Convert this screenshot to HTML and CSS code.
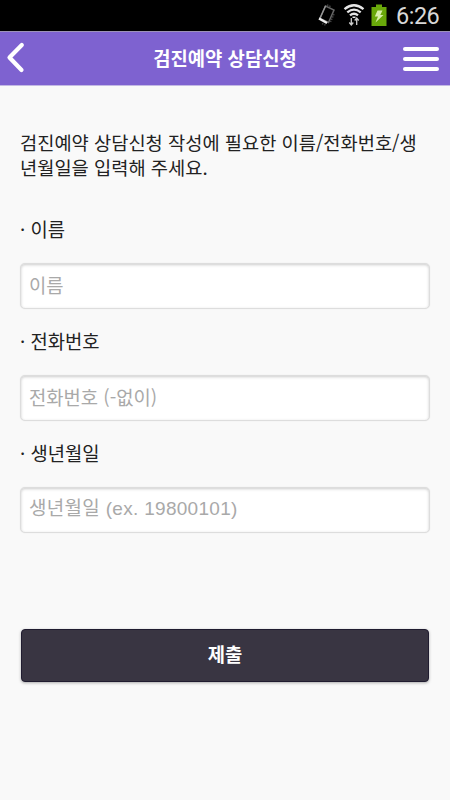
FILE: index.html
```html
<!DOCTYPE html>
<html lang="ko">
<head>
<meta charset="utf-8">
<title>검진예약 상담신청</title>
<link rel="stylesheet" href="styles.css">
</head>
<body>
<div class="status">
  <svg class="rotate" width="18" height="22" viewBox="0 0 18 22" fill="none">
    <path d="M7.500 2L16 6L10.500 18.500L2 14.500Z" stroke="#666" stroke-width="1.500"/>
    <path d="M7.500 2L1.800 14.500" stroke="#999" stroke-width="1.300"/>
    <path d="M1 14.500L9 19" stroke="#eee" stroke-width="2.400"/>
    <path d="M9 .8L13 2.800M16 10L12.500 18M4 19.500L7.500 21" stroke="#444" stroke-width="1.500" stroke-dasharray="1.500 1"/>
  </svg>
  <svg class="wifi" width="22" height="24" viewBox="0 0 22 24" fill="none" stroke="#e6e6e6" stroke-width="2">
    <path d="M1.500 5.200Q11 -2.600 20.500 5.200M4.300 8.400Q11 2.800 17.700 8.400M7 11.400Q11 8 15 11.400" stroke-width="2.300"/>
    <path d="M9.500 13.300h3" stroke-width="1.500"/>
    <path d="M8.300 14v7M6.300 18.500l2 2.500l2 -2.500M13.700 21v-7M11.700 16.500l2-2.500l2 2.500" stroke-width="1.300" stroke="#ccc"/>
  </svg>
  <svg class="battery" width="16" height="22" viewBox="0 0 16 22">
    <path d="M.5 3H5V.5h6V3h4.500v19H.5Z" fill="#69a80a"/>
    <path d="M6.500 6.500h5l-2.200 4.500H12.500L4.500 18.500l2.500-6H3.800Z" fill="#d8efab"/>
  </svg>
  <span class="clock">6:26</span>
</div>
<header class="bar">
  <svg class="back" width="37" height="32" viewBox="0 0 37 32" fill="none" stroke="#fff" stroke-width="4.200" stroke-linecap="round" stroke-linejoin="round"><path d="M16.800 3L4.500 15.500L16.500 28"/></svg>
  <h1 class="title">검진예약 상담신청</h1>
  <div class="menu"><i></i><i></i><i></i></div>
</header>
<main class="content">
  <p class="intro">검진예약 상담신청 작성에 필요한 이름/전화번호/생<br>년월일을 입력해 주세요.</p>
  <form class="form">
    <label class="label" for="name">· 이름</label>
    <input class="field" id="name" type="text" placeholder="이름">
    <label class="label" for="phone">· 전화번호</label>
    <input class="field" id="phone" type="tel" placeholder="전화번호 (-없이)">
    <label class="label" for="birth">· 생년월일</label>
    <input class="field birth" id="birth" type="text" placeholder="생년월일 (ex. 19800101)">
    <button class="submit" type="button">제출</button>
  </form>
</main>
</body>
</html>
```
FILE: styles.css
```css
* { box-sizing: border-box; }
body {
  margin: 0;
  height: 800px;
  overflow: hidden;
  background: #f9f9f9;
  color: #222;
  font-family: "Noto Sans CJK KR", sans-serif;
  font-size: 18.8px;
}
.status {
  height: 31px;
  background: #000;
  display: flex;
  align-items: flex-start;
  padding: 4px 12px 0 0;
  justify-content: flex-end;
}
.rotate { margin-right: 7px; }
.wifi { margin-right: 6px; }
.battery { margin-right: 9px; }
.clock {
  font: 23.5px/25px Roboto, sans-serif;
  width: 42px;
  color: #d8d8d8;
  white-space: nowrap;
  letter-spacing: -.5px;
}
.bar {
  height: 55px;
  display: flex;
  align-items: center;
  justify-content: space-between;
  padding: 0 11px 0 5px;
  background: #7e62d0;
  border-top: 1px solid #9c92b8;
  border-bottom: 1px solid #c3b9e4;
}
.back { margin-bottom: 2px; }
.title {
  margin: 0 0 2px 5px;
  color: #fff;
  font-size: 18.8px;
  line-height: 28px;
  font-weight: 700;
}
.menu {
  width: 36px;
  display: grid;
  gap: 6px;
}
.menu i {
  height: 4px;
  border-radius: 2px;
  background: #fff;
}
.content { padding: 43px 20px 0; }
.intro { margin: 0 0 36px; font-size: 18.7px; line-height: 25px; }
.form { display: flex; flex-direction: column; }
.label { line-height: 27px; margin-bottom: 21px; }
.field {
  height: 46px;
  margin: 0 0 18px;
  padding: 0 9px 3px 8px;
  border: 1px solid #ddd;
  border-radius: 5px;
  background: #fff;
  box-shadow: inset 0 1px 3px #ccc, 0 0 1px #ddd;
  font: inherit;
}
.field::placeholder { color: #a9a9a9; opacity: 1; }
.birth {
  padding-bottom: 2px;
  font-family: "Liberation Sans", "Noto Sans CJK KR", sans-serif;
  font-size: 19px;
  letter-spacing: .3px;
}
.submit {
  height: 53px;
  margin: 78px 1px 0;
  padding: 0 0 5px;
  border: 1px solid #201c30;
  border-radius: 4px;
  background: #393542;
  box-shadow: 0 1px 3px #aaa;
  color: #fff;
  font: inherit;
  font-weight: 700;
}
```
